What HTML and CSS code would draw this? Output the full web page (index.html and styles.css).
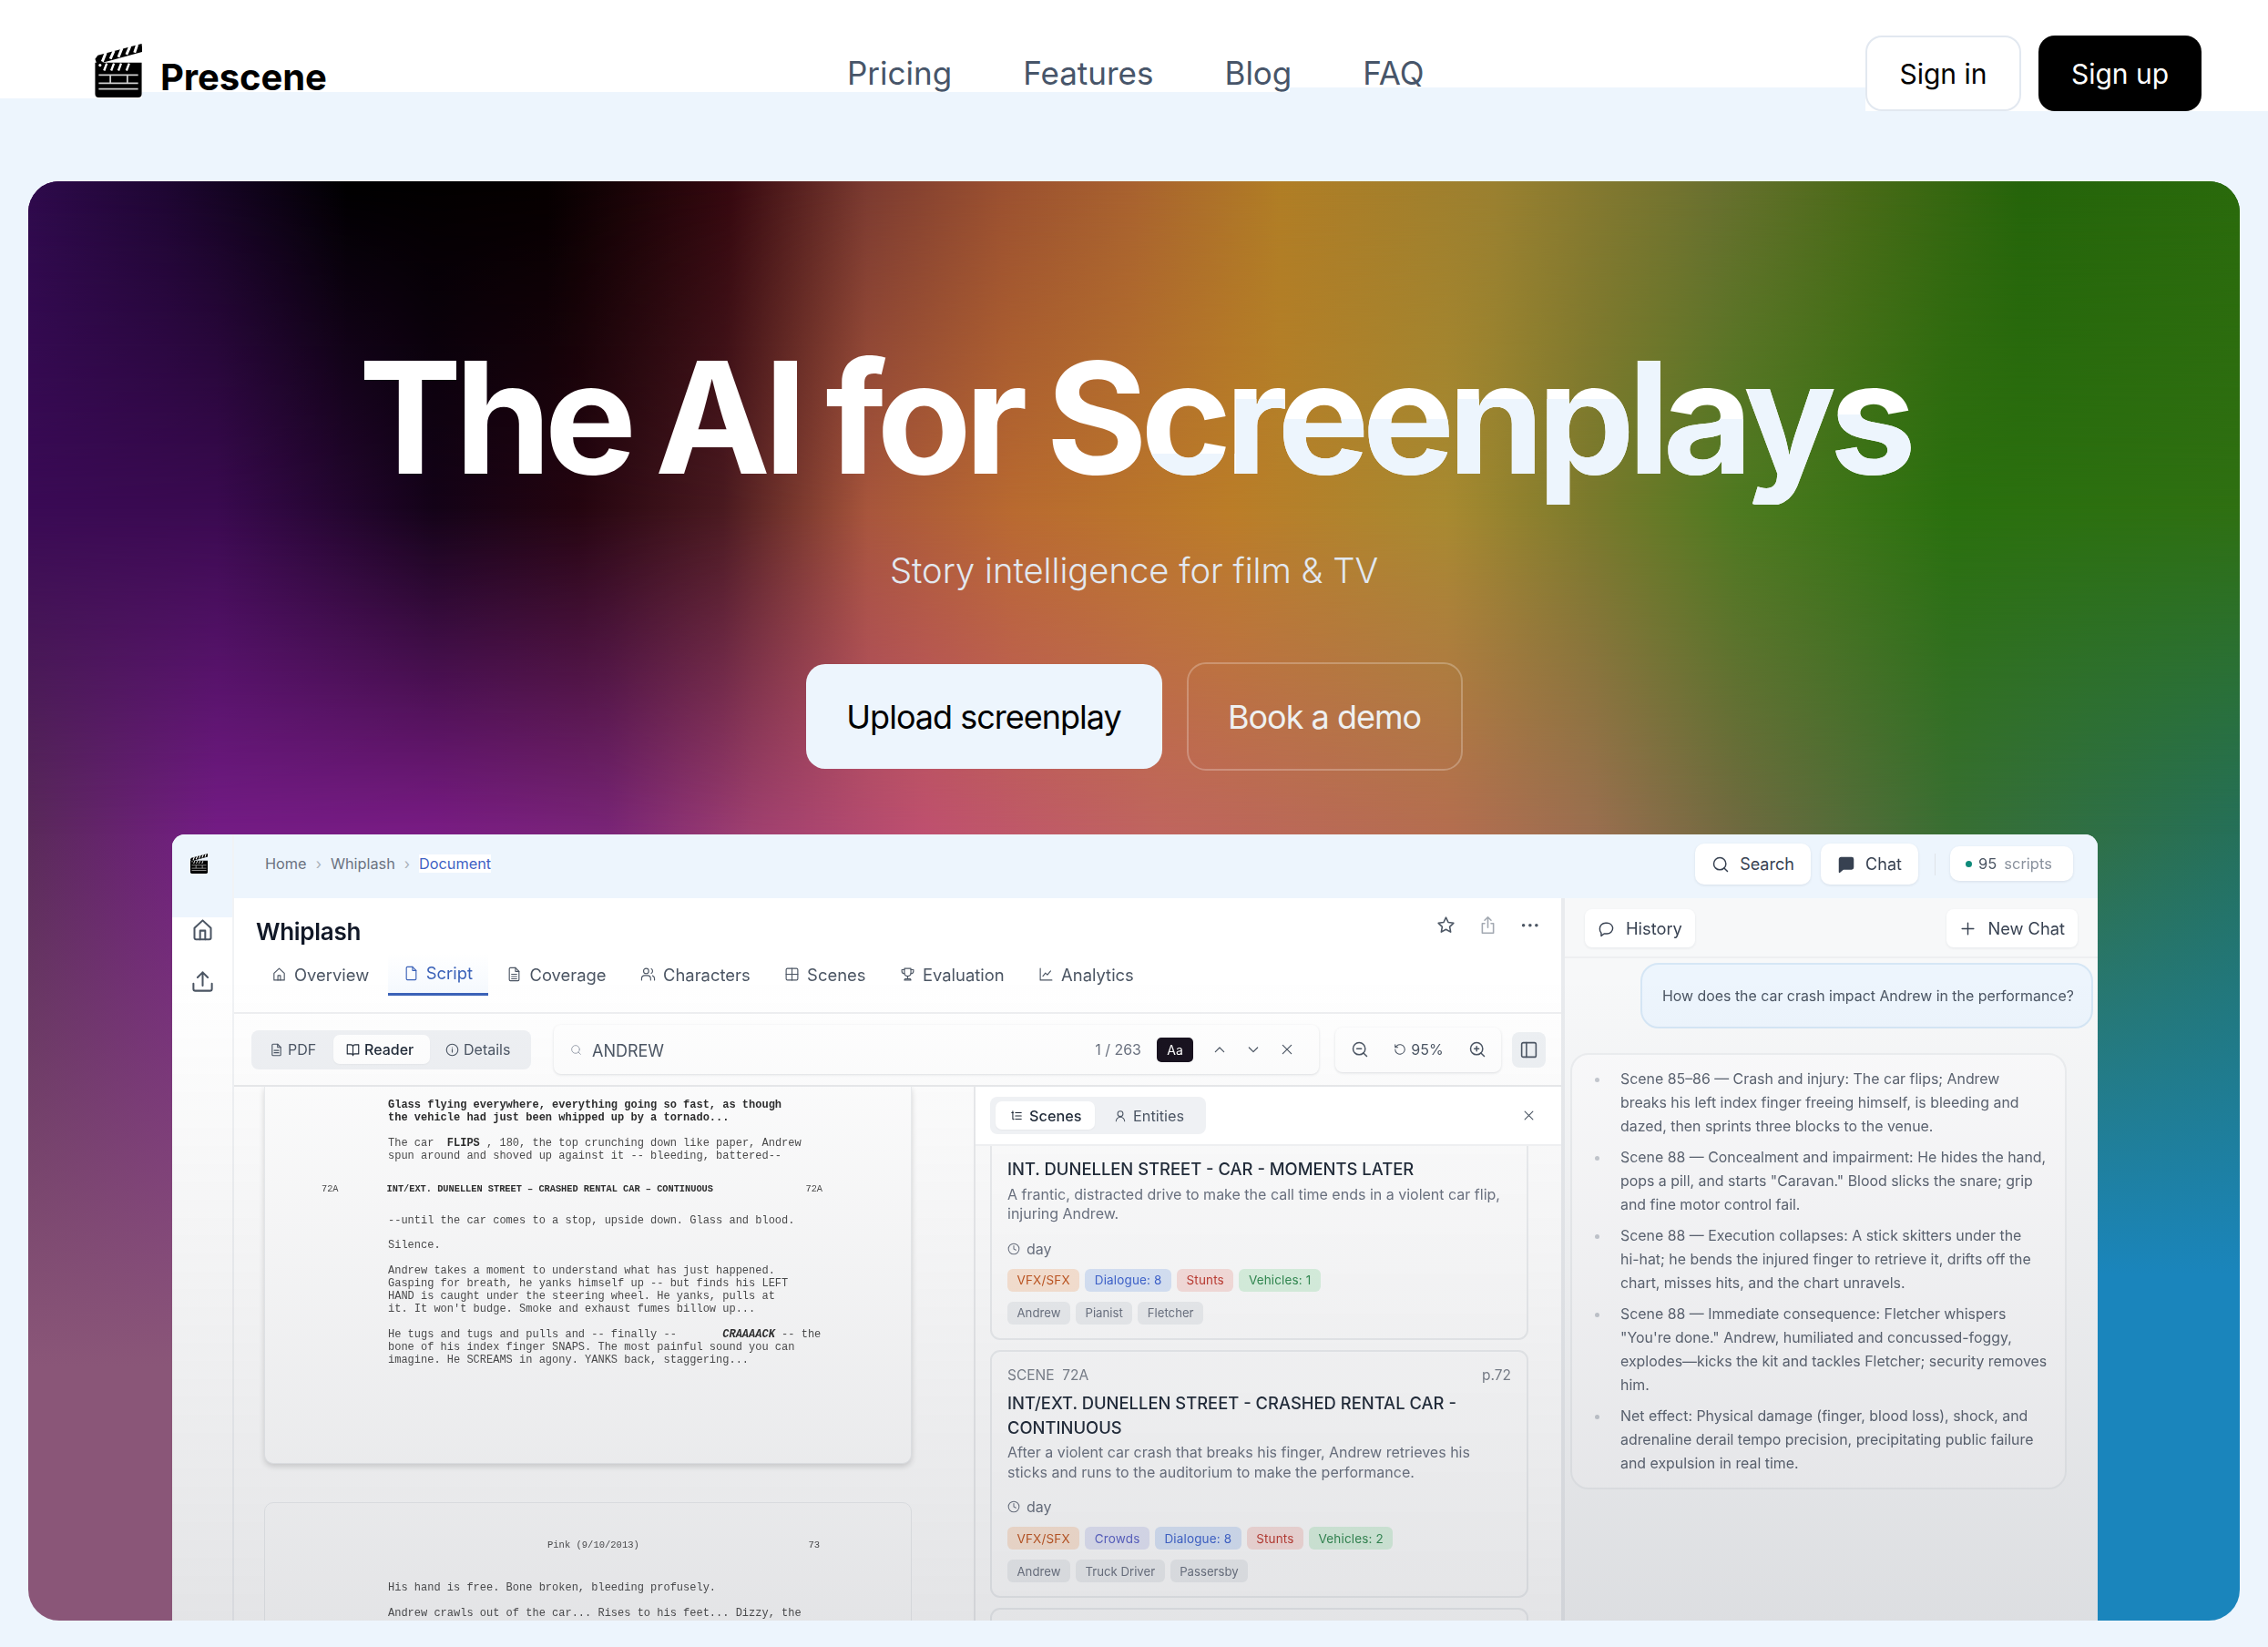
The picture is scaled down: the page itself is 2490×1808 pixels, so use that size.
FILE: index.html
```html
<!DOCTYPE html>
<html lang="en">
<head>
    <meta charset="UTF-8">
    <title>Prescene - The AI for Screenplays</title>
    <link rel="stylesheet" href="styles.css">
</head>
<body>
    <svg class="sprites" width="0" height="0">
        <symbol id="clapper" viewBox="0 0 52 60">
            <path d="M0 17 3 13 52 0 53 9 2 23z" fill="#000"/>
            <path d="M8 20 12 10M17 17 21 8M26 15 30 5M35 12 39 3M44 10 47 1" stroke="#fff" stroke-width="3" fill="none"/>
            <path d="M0 21h52v35a4 4 0 0 1-4 4H4a4 4 0 0 1-4-4z" fill="#000"/>
            <path d="M10 30l3-8M18 30l3-8M26 30l3-8M35 30l3-8" stroke="#fff" stroke-width="2.400" fill="none"/>
            <path d="M4 35h44M4 44h44M4 50.500h44M17 35v9M36 35v9" stroke="#cfcfcf" stroke-width="1.800" fill="none"/>
            <circle cx="5.500" cy="24" r="1.600" fill="#fff"/>
        </symbol>
    </svg>

    <header class="site-header">
        <a class="brand">
            <svg class="brand-logo"><use href="#clapper"/></svg>
            <span>Prescene</span>
        </a>
        <nav class="site-nav">
            <a>Pricing</a>
            <a>Features</a>
            <a>Blog</a>
            <a>FAQ</a>
        </nav>
        <div class="auth">
            <a class="sign-in">Sign in</a>
            <a class="sign-up">Sign up</a>
        </div>
    </header>

    <section class="hero">
        <h1>The AI for Screenplays</h1>
        <p class="tagline">Story intelligence for film &amp; TV</p>
        <div class="cta">
            <a class="cta-main">Upload screenplay</a>
            <a class="cta-alt">Book a demo</a>
        </div>

        <div class="app">
            <aside class="rail">
                <div class="rail-top"><svg class="rail-logo"><use href="#clapper"/></svg></div>
                <svg class="icon rail-icon" viewBox="0 0 24 24"><path d="M4 10.500 12 3l8 7.500V20a1.500 1.500 0 0 1-1.500 1.500h-13A1.500 1.500 0 0 1 4 20z"/><path d="M9.500 21.500V13h5v8.500"/></svg>
                <svg class="icon rail-icon" viewBox="0 0 24 24"><path d="M12 16V3M7 8l5-5 5 5"/><path d="M3 14v5a2 2 0 0 0 2 2h14a2 2 0 0 0 2-2v-5"/></svg>
            </aside>

            <div class="workspace">
                <div class="topbar">
                    <div class="crumbs">
                        <span>Home</span><i>›</i><span>Whiplash</span><i>›</i><span class="crumb-now">Document</span>
                    </div>
                    <div class="top-actions">
                        <a class="top-btn search-btn">
                            <svg class="icon" viewBox="0 0 24 24"><circle cx="11" cy="11" r="8"/><path d="m21 21-4.300-4.300"/></svg>Search
                        </a>
                        <a class="top-btn chat-btn">
                            <svg class="icon" viewBox="0 0 24 24"><path class="solid" d="M3 5a2 2 0 0 1 2-2h14a2 2 0 0 1 2 2v11a2 2 0 0 1-2 2H8l-5 4z"/></svg>Chat
                        </a>
                        <span class="top-sep"></span>
                        <span class="scripts-pill"><b class="dot"></b><em>95</em> scripts</span>
                    </div>
                </div>

                <div class="panes">
                    <main class="doc">
                        <div class="doc-head">
                            <div class="doc-title">
                                <h2>Whiplash</h2>
                                <div class="doc-tools">
                                    <svg class="icon" viewBox="0 0 24 24"><path d="m12 2.500 2.900 6.100 6.600.9-4.800 4.600 1.200 6.600-5.900-3.200-5.900 3.200 1.200-6.600L2.500 9.500l6.600-.9z"/></svg>
                                    <svg class="icon faint" viewBox="0 0 24 24"><path d="M12 15V2M8 6l4-4 4 4"/><path d="M8 10H5v12h14V10h-3"/></svg>
                                    <span class="dots">•••</span>
                                </div>
                            </div>
                            <nav class="tabs">
                                <a><svg class="icon" viewBox="0 0 24 24"><path d="M4 10.500 12 3l8 7.500V21H4z"/><path d="M10 21v-7h4v7"/></svg>Overview</a>
                                <a class="tab-on"><svg class="icon" viewBox="0 0 24 24"><path d="M14 2H6a1.500 1.500 0 0 0-1.500 1.500v17A1.500 1.500 0 0 0 6 22h12a1.500 1.500 0 0 0 1.500-1.500V7.500z"/><path d="M14 2v5.500h5.500"/></svg>Script</a>
                                <a><svg class="icon" viewBox="0 0 24 24"><path d="M14 2H6a1.500 1.500 0 0 0-1.500 1.500v17A1.500 1.500 0 0 0 6 22h12a1.500 1.500 0 0 0 1.500-1.500V7.500z"/><path d="M14 2v5.500h5.500M8 12h8M8 15.500h8M8 19h8"/></svg>Coverage</a>
                                <a><svg class="icon" viewBox="0 0 24 24"><circle cx="9" cy="7" r="4"/><path d="M2 21v-2a5 5 0 0 1 5-5h4a5 5 0 0 1 5 5v2M17 3.500a4 4 0 0 1 0 7M19 14.300a5 5 0 0 1 3 4.700v2"/></svg>Characters</a>
                                <a><svg class="icon" viewBox="0 0 24 24"><rect x="3" y="3" width="18" height="18" rx="2"/><path d="M3 12h18M12 3v18"/></svg>Scenes</a>
                                <a><svg class="icon" viewBox="0 0 24 24"><path d="M7 3h10v7a5 5 0 0 1-10 0z"/><path d="M7 5H3v2a4 4 0 0 0 4 4M17 5h4v2a4 4 0 0 1-4 4M12 15v4M7 21l1-2h8l1 2z"/></svg>Evaluation</a>
                                <a><svg class="icon" viewBox="0 0 24 24"><path d="M3 3v18h18"/><path d="m7 15 4-5 3 3 5-6"/></svg>Analytics</a>
                            </nav>
                        </div>

                        <div class="doc-toolbar">
                            <div class="seg">
                                <a><svg class="icon" viewBox="0 0 24 24"><path d="M14 2H6a1.500 1.500 0 0 0-1.500 1.500v17A1.500 1.500 0 0 0 6 22h12a1.500 1.500 0 0 0 1.500-1.500V7.500z"/><path d="M14 2v5.500h5.500M8 13h8M8 17h8"/></svg>PDF</a>
                                <a class="seg-on"><svg class="icon" viewBox="0 0 24 24"><path d="M12 6a4 4 0 0 0-4-3H2v16h7a3 3 0 0 1 3 3 3 3 0 0 1 3-3h7V3h-6a4 4 0 0 0-4 3zM12 6v16"/></svg>Reader</a>
                                <a><svg class="icon" viewBox="0 0 24 24"><circle cx="12" cy="12" r="10"/><path d="M12 16v-5M12 8h.010"/></svg>Details</a>
                            </div>
                            <div class="find">
                                <svg class="icon find-glass" viewBox="0 0 24 24"><circle cx="11" cy="11" r="8"/><path d="m21 21-4.300-4.300"/></svg>
                                <span class="find-term">ANDREW</span>
                                <span class="find-count">1 / 263</span>
                                <span class="find-case">Aa</span>
                                <svg class="icon find-nav" viewBox="0 0 24 24"><path d="m5 16 7-7 7 7"/></svg>
                                <svg class="icon find-nav" viewBox="0 0 24 24"><path d="m5 9 7 7 7-7"/></svg>
                                <svg class="icon find-nav" viewBox="0 0 24 24"><path d="M5 5l14 14M19 5 5 19"/></svg>
                            </div>
                            <div class="zoom">
                                <svg class="icon" viewBox="0 0 24 24"><circle cx="11" cy="11" r="8"/><path d="m21 21-4.300-4.300M8 11h6"/></svg>
                                <span class="zoom-val"><svg class="icon" viewBox="0 0 24 24"><path d="M3 12a9 9 0 1 0 3-6.700L3 8M3 3v5h5"/></svg>95%</span>
                                <svg class="icon" viewBox="0 0 24 24"><circle cx="11" cy="11" r="8"/><path d="m21 21-4.300-4.300M11 8v6M8 11h6"/></svg>
                            </div>
                            <span class="panel-toggle"><svg class="icon" viewBox="0 0 24 24"><rect x="3" y="3" width="18" height="18" rx="2"/><path d="M9 3v18"/></svg></span>
                        </div>

                        <div class="doc-body">
                            <div class="reader">
                                <div class="page page-one">
                                    <p class="strong">Glass flying everywhere, everything going so fast, as though
the vehicle had just been whipped up by a tornado...</p>
                                    <p>The car  <b>FLIPS</b> , 180, the top crunching down like paper, Andrew
spun around and shoved up against it -- bleeding, battered--</p>
                                    <div class="slug"><span>72A</span><b>INT/EXT. DUNELLEN STREET – CRASHED RENTAL CAR – CONTINUOUS</b><span>72A</span></div>
                                    <p>--until the car comes to a stop, upside down. Glass and blood.</p>
                                    <p>Silence.</p>
                                    <p>Andrew takes a moment to understand what has just happened.
Gasping for breath, he yanks himself up -- but finds his LEFT
HAND is caught under the steering wheel. He yanks, pulls at
it. It won't budge. Smoke and exhaust fumes billow up...</p>
                                    <p>He tugs and tugs and pulls and -- finally --       <b><i>CRAAAACK</i></b> -- the
bone of his index finger SNAPS. The most painful sound you can
imagine. He SCREAMS in agony. YANKS back, staggering...</p>
                                </div>
                                <div class="page page-two">
                                    <div class="page-mark"><span>Pink (9/10/2013)</span><span>73</span></div>
                                    <p>His hand is free. Bone broken, bleeding profusely.</p>
                                    <p>Andrew crawls out of the car... Rises to his feet... Dizzy, the</p>
                                </div>
                            </div>

                            <div class="scenes">
                                <div class="scenes-head">
                                    <div class="scenes-seg">
                                        <a class="seg-on"><svg class="icon" viewBox="0 0 24 24"><path d="M3 6h3M10 6h11M10 12h11M10 18h11M5 3v15a2 2 0 0 0 2 0"/></svg>Scenes</a>
                                        <a><svg class="icon" viewBox="0 0 24 24"><circle cx="12" cy="8" r="5"/><path d="M4 22a8 8 0 0 1 16 0"/></svg>Entities</a>
                                    </div>
                                    <svg class="icon scenes-close" viewBox="0 0 24 24"><path d="M5 5l14 14M19 5 5 19"/></svg>
                                </div>
                                <div class="scene-list">
                                    <article class="scene-card card-cut">
                                        <h3>INT. DUNELLEN STREET - CAR - MOMENTS LATER</h3>
                                        <p class="scene-desc">A frantic, distracted drive to make the call time ends in a violent car flip, injuring Andrew.</p>
                                        <div class="scene-time"><svg class="icon" viewBox="0 0 24 24"><circle cx="12" cy="12" r="10"/><path d="M12 6v6l4 2"/></svg>day</div>
                                        <div class="chips">
                                            <span class="chip vfx">VFX/SFX</span><span class="chip dialog">Dialogue: 8</span><span class="chip stunt">Stunts</span><span class="chip vehicle">Vehicles: 1</span>
                                        </div>
                                        <div class="chips people">
                                            <span class="chip">Andrew</span><span class="chip">Pianist</span><span class="chip">Fletcher</span>
                                        </div>
                                    </article>
                                    <article class="scene-card">
                                        <div class="scene-no"><span>SCENE&nbsp; 72A</span><span>p.72</span></div>
                                        <h3>INT/EXT. DUNELLEN STREET - CRASHED RENTAL CAR - CONTINUOUS</h3>
                                        <p class="scene-desc">After a violent car crash that breaks his finger, Andrew retrieves his sticks and runs to the auditorium to make the performance.</p>
                                        <div class="scene-time"><svg class="icon" viewBox="0 0 24 24"><circle cx="12" cy="12" r="10"/><path d="M12 6v6l4 2"/></svg>day</div>
                                        <div class="chips">
                                            <span class="chip vfx">VFX/SFX</span><span class="chip crowd">Crowds</span><span class="chip dialog">Dialogue: 8</span><span class="chip stunt">Stunts</span><span class="chip vehicle">Vehicles: 2</span>
                                        </div>
                                        <div class="chips people">
                                            <span class="chip">Andrew</span><span class="chip">Truck Driver</span><span class="chip">Passersby</span>
                                        </div>
                                    </article>
                                    <article class="scene-card"></article>
                                </div>
                            </div>
                        </div>
                    </main>

                    <aside class="chat">
                        <div class="chat-head">
                            <a class="chat-btn-sm"><svg class="icon" viewBox="0 0 24 24"><path d="M21 11a8 8 0 0 1-8 8H9l-4 3v-4a8 8 0 0 1-2-6 8 8 0 0 1 8-8h2a8 8 0 0 1 8 7z"/></svg>History</a>
                            <a class="chat-btn-sm"><svg class="icon" viewBox="0 0 24 24"><path d="M12 4v16M4 12h16"/></svg>New Chat</a>
                        </div>
                        <div class="bubble">How does the car crash impact Andrew in the performance?</div>
                        <ul class="answer">
                            <li>Scene 85–86 — Crash and injury: The car flips; Andrew <span class="nowrap">breaks his</span> left index finger freeing himself, is bleeding and dazed, then sprints three blocks to the venue.</li>
                            <li>Scene 88 — Concealment and impairment: He hides the hand, pops a pill, and starts "Caravan." Blood slicks the snare; grip and fine motor control fail.</li>
                            <li>Scene 88 — Execution collapses: A stick skitters under the <span class="nowrap">hi-hat;</span> he bends the injured finger to retrieve it, drifts off the chart, misses hits, and the chart unravels.</li>
                            <li>Scene 88 — Immediate consequence: Fletcher whispers "You're done." Andrew, humiliated and concussed-foggy, explodes—kicks the kit and tackles Fletcher; security removes him.</li>
                            <li>Net effect: Physical damage (finger, blood loss), shock, and adrenaline derail tempo precision, precipitating public failure and expulsion in real time.</li>
                        </ul>
                    </aside>
                </div>
            </div>
        </div>
    </section>
</body>
</html>
```

FILE: styles.css
```css
* {
    box-sizing: border-box;
}
html, body {
    margin: 0;
    height: 1808px;
    overflow: hidden;
}
body {
    font-family: Inter, "Liberation Sans", sans-serif;
    background-color: #edf5fd;
    color: #000;
    /* the white bar has an uneven lower edge in the capture */
    background-image:
        linear-gradient(#fff, #fff),
        linear-gradient(#fff, #fff),
        linear-gradient(#fff, #fff),
        linear-gradient(#fff, #fff);
    background-repeat: no-repeat;
    background-size: 156px 108px, 1260px 101px, 632px 96px, 442px 122px;
    background-position: 0 0, 156px 0, 1416px 0, 2048px 0;
}
a {
    color: inherit;
    text-decoration: none;
}
.sprites {
    position: absolute;
}
.nowrap {
    white-space: nowrap;
}
.icon {
    width: 16px;
    height: 16px;
    fill: none;
    stroke: currentColor;
    stroke-width: 1.800;
    stroke-linecap: round;
    stroke-linejoin: round;
    flex: none;
}
.icon .solid {
    fill: currentColor;
}

/* header */
.site-header {
    height: 199px;
    padding: 39px 0 0 104px;
    display: flex;
    align-items: flex-start;
}
.brand {
    display: flex;
    align-items: flex-end;
    gap: 20px;
    width: 826px;
    margin-top: 9px;
    font-size: 40px;
    font-weight: 700;
    letter-spacing: -0.1px;
    line-height: 59px;
}
.brand span {
    position: relative;
    top: 7px;
}
.brand-logo {
    width: 52px;
    height: 59px;
}
.site-nav {
    display: flex;
    gap: 78px;
    font-size: 35px;
    color: #475569;
    line-height: 44px;
    margin-top: 19px;
    width: 1118px;
}
.auth {
    display: flex;
    gap: 19px;
    font-size: 30px;
}
.auth a {
    height: 83px;
    border-radius: 18px;
    display: flex;
    align-items: center;
    justify-content: center;
}
.sign-in {
    width: 171px;
    background: #fff;
    border: 2px solid #e2e8f0;
}
.sign-up {
    width: 179px;
    background: #000;
    color: #fff;
}

/* hero: three colour rows blended down the card, strips below the last row */
.hero {
    margin: 0 31px;
    height: 1580px;
    width: 2428px;
    border-radius: 34px;
    overflow: hidden;
    position: relative;
    isolation: isolate;
    text-align: center;
    color: #fff;
    background-image:
        linear-gradient(180deg, rgba(138, 86, 120, 0) 717px, #8a5678 1300px),
        linear-gradient(180deg, rgba(26, 133, 188, 0) 717px, #1a85bc 1200px),
        linear-gradient(90deg, #5a2a5a 0, #741c85 207px, #7a1c85 445px, #7a2578 636px, #a04070 795px, #bf5070 985px, #c0655f 1240px, #b56e50 1557px, #9b6f50 1716px, #706a40 1875px, #386f33 2113px, #25705a 2428px);
    background-repeat: no-repeat;
    background-size: 158px 100%, 156px 100%, 100% 100%;
    background-position: 0 0, 100% 0, 0 0;
}
.hero::before,
.hero::after {
    content: "";
    position: absolute;
    inset: 0;
    z-index: 0;
}
.hero::before {
    background: linear-gradient(90deg, #3a0a55 0, #3a0a50 207px, #140318 445px, #250510 604px, #4a1a20 763px, #a8563c 922px, #b96a30 1081px, #bb7d28 1319px, #a88a30 1557px, #7a7a2c 1716px, #4e7a20 1875px, #2a700e 2113px, #2f7012 2428px);
    -webkit-mask-image: linear-gradient(180deg, #000 361px, transparent 717px);
    mask-image: linear-gradient(180deg, #000 361px, transparent 717px);
}
.hero::after {
    background: linear-gradient(90deg, #2e0a4c 0, #1e0632 150px, #000 350px, #050000 570px, #35080f 770px, #7a3a30 920px, #9a5030 1070px, #a8622f 1214px, #b07d25 1373px, #9a8030 1610px, #6a7030 1850px, #4a6a18 2010px, #25640a 2190px, #2a6a0c 2428px);
    -webkit-mask-image: linear-gradient(180deg, #000 0, transparent 361px);
    mask-image: linear-gradient(180deg, #000 0, transparent 361px);
}
.hero h1,
.tagline,
.cta,
.app {
    position: relative;
    z-index: 1;
}
.hero h1 {
    margin: 0;
    padding-top: 163px;
    font-size: 170px;
    line-height: 192px;
    font-weight: 700;
    letter-spacing: -7.600px;
    word-spacing: -5px;
    color: transparent;
    /* the capture shows the page's pale blue through the lower part of some letters */
    background-image:
        linear-gradient(#edf5fd, #edf5fd),
        linear-gradient(#edf5fd, #edf5fd),
        linear-gradient(#edf5fd, #edf5fd),
        linear-gradient(#edf5fd, #edf5fd),
        linear-gradient(#edf5fd, #edf5fd),
        linear-gradient(#edf5fd, #edf5fd),
        linear-gradient(#edf5fd, #edf5fd),
        linear-gradient(#edf5fd, #edf5fd),
        linear-gradient(#fff, #fff);
    background-repeat: no-repeat;
    background-size: 93px 100%, 53px 100%, 188px 100%, 197px 100%, 35px 100%, 90px 100%, 92px 100%, 100px 100%, 100% 100%;
    background-position: 1232px 299px, 1326px 239px, 1379px 261px, 1567px 239px, 1764px 0, 1799px 261px, 1889px 0, 1981px 256px, 0 0;
    -webkit-background-clip: text;
    background-clip: text;
}
.tagline {
    margin: 50px 0 0;
    font-size: 38.200px;
    line-height: 45px;
    font-weight: 300;
    color: #e2e8f0;
}
.cta {
    display: flex;
    justify-content: center;
    gap: 27px;
    margin-top: 78px;
    font-size: 36px;
    letter-spacing: -1px;
}
.cta a {
    display: flex;
    align-items: center;
    justify-content: center;
    border-radius: 21px;
}
.cta-main {
    width: 391px;
    height: 115px;
    background: #edf5fd;
    color: #000;
    margin-top: 2px;
}
.cta-alt {
    width: 303px;
    height: 119px;
    color: #eef0f0;
    border: 2px solid rgba(255, 255, 255, .25);
}

/* the app picture */
.app {
    margin: 70px 0 0 158px;
    width: 2114px;
    height: 863px;
    background: #fff;
    border-radius: 14px 14px 0 0;
    overflow: hidden;
    display: flex;
    text-align: left;
    color: #4b5563;
    font-size: 16px;
    filter: blur(.45px);
}
.app::after {
    content: "";
    position: absolute;
    inset: 0;
    pointer-events: none;
    background: linear-gradient(180deg, rgba(60, 65, 80, 0) 18%, rgba(60, 65, 80, .14) 100%);
}
.rail {
    width: 68px;
    flex: none;
    border-right: 2px solid #f1f3f5;
    display: flex;
    flex-direction: column;
    align-items: center;
}
.rail-top {
    align-self: stretch;
    height: 91px;
    background: #edf5fd;
    padding: 21px 0 0 20px;
}
.rail-logo {
    width: 19px;
    height: 22px;
    display: block;
}
.rail-icon {
    width: 27px;
    height: 27px;
    color: #4b5563;
    margin: 0 0 30px;
}
.workspace {
    flex: 1;
    min-width: 0;
    display: flex;
    flex-direction: column;
}
.topbar {
    height: 70px;
    background: #edf5fd;
    display: flex;
    justify-content: space-between;
    align-items: flex-start;
    padding: 10px 27px 0 34px;
}
.crumbs {
    display: flex;
    align-items: center;
    gap: 10px;
    font-size: 16.300px;
    color: #6b7280;
    height: 44px;
}
.crumbs i {
    font-style: normal;
    color: #aab0b8;
}
.crumb-now {
    color: #3f62c4;
    background: #fff;
}
.top-actions {
    display: flex;
    align-items: flex-start;
    gap: 11px;
    color: #374151;
}
.top-btn {
    display: flex;
    align-items: center;
    justify-content: center;
    gap: 11px;
    height: 45px;
    background: #fff;
    border-radius: 10px;
    box-shadow: 0 1px 3px rgba(30, 40, 60, .1);
    font-size: 18px;
}
.top-btn .icon {
    width: 20px;
    height: 20px;
}
.search-btn {
    width: 127px;
}
.chat-btn {
    width: 107px;
}
.top-sep {
    width: 1px;
    height: 24px;
    margin: 11px 5px 0 7px;
    background: #dfe3e8;
}
.scripts-pill {
    width: 135px;
    height: 38px;
    margin-top: 3px;
    display: flex;
    align-items: center;
    gap: 7px;
    padding-left: 17px;
    background: #fff;
    border-radius: 10px;
    box-shadow: 0 1px 3px rgba(30, 40, 60, .1);
    font-size: 16.500px;
    color: #8a929e;
}
.scripts-pill em {
    font-style: normal;
    color: #4b5563;
    margin-right: 1px;
}
.dot {
    width: 7px;
    height: 7px;
    border-radius: 50%;
    background: #0f8a7a;
}
.panes {
    flex: 1;
    display: flex;
    min-height: 0;
}
.doc {
    width: 1457px;
    display: flex;
    flex-direction: column;
}
.doc-head {
    height: 127px;
    border-bottom: 2px solid #eeeff1;
    padding: 20px 23px 0 24px;
}
.doc-title {
    display: flex;
    justify-content: space-between;
    height: 34px;
    align-items: center;
}
.doc-title h2 {
    margin: 0;
    font-size: 26px;
    line-height: 34px;
    font-weight: 600;
    letter-spacing: -0.300px;
    color: #111827;
}
.doc-tools {
    display: flex;
    align-items: center;
    gap: 25px;
    margin-top: -16px;
    color: #4b5563;
}
.doc-tools .icon {
    width: 21px;
    height: 21px;
}
.doc-tools .faint {
    color: #a3a9b2;
}
.dots {
    font-size: 11px;
    letter-spacing: 1px;
}
.tabs {
    display: flex;
    gap: 3.500px;
    margin-top: 6px;
    height: 47px;
    font-size: 18.400px;
}
.tabs a {
    display: flex;
    align-items: center;
    gap: 8px;
    padding: 0 17px;
    height: 47px;
}
.tab-on {
    color: #3b62b8;
    border-bottom: 3px solid #3b62b8;
    background: linear-gradient(180deg, #fff 0, #f5f9fe 100%);
}
.tabs .icon {
    width: 17px;
    height: 17px;
    stroke-width: 1.600;
}
.doc-toolbar {
    height: 80px;
    border-bottom: 2px solid #e9eaec;
    display: flex;
    align-items: center;
    padding: 0 16px 0 19px;
    position: relative;
}
.seg {
    display: flex;
    align-items: center;
    width: 307px;
    height: 43px;
    padding: 0 4px 0 20px;
    gap: 0;
    background: #eff1f4;
    border-radius: 8px;
    font-size: 16px;
}
.seg a {
    display: flex;
    align-items: center;
    gap: 5px;
    height: 32px;
}
.seg a:first-child {
    width: 70px;
}
.seg-on {
    background: #fff;
    border-radius: 7px;
    color: #1f2937;
    font-weight: 500;
    box-shadow: 0 1px 2px rgba(0, 0, 0, .04);
}
.seg .seg-on {
    width: 106px;
    padding-left: 14px;
    margin-right: 17px;
}
.seg .icon {
    width: 15px;
    height: 15px;
}
.find {
    width: 840px;
    height: 54px;
    margin-left: 25px;
    padding: 0 27px 0 18px;
    display: flex;
    align-items: center;
    border-radius: 8px;
    background: #fff;
    box-shadow: 0 1px 3px rgba(30, 40, 60, .14);
    font-size: 18px;
}
.find-glass {
    width: 13px;
    height: 13px;
    color: #9ca3af;
}
.find-term {
    margin-left: 11px;
    flex: 1;
    padding-top: 3px;
}
.find-count {
    color: #6b7280;
    font-size: 16px;
    margin-right: 17px;
}
.find-case {
    width: 40px;
    height: 27px;
    background: #18121f;
    color: #fff;
    border-radius: 5px;
    display: flex;
    align-items: center;
    justify-content: center;
    font-size: 14px;
    margin-right: 21px;
}
.find-nav {
    margin-left: 21px;
    color: #4b5563;
}
.find-case + .find-nav {
    margin-left: 0;
}
.zoom {
    width: 182px;
    height: 49px;
    margin-left: 18px;
    padding: 0 16px 0 17px;
    display: flex;
    align-items: center;
    justify-content: space-between;
    border-radius: 8px;
    background: #fff;
    box-shadow: 0 1px 3px rgba(30, 40, 60, .14);
    font-size: 16px;
}
.zoom > .icon {
    width: 20px;
    height: 20px;
}
.zoom-val {
    display: flex;
    align-items: center;
    gap: 5px;
}
.zoom-val .icon {
    width: 14px;
    height: 14px;
}
.panel-toggle {
    width: 37px;
    height: 39px;
    margin-left: 12px;
    border-radius: 8px;
    background: #eef1f4;
    display: flex;
    align-items: center;
    justify-content: center;
}
.panel-toggle .icon {
    width: 21px;
    height: 21px;
}
.doc-body {
    flex: 1;
    display: flex;
    min-height: 0;
}
.reader {
    width: 814px;
    flex: none;
    border-right: 2px solid #eaebed;
    padding: 0 69px 0 33px;
    overflow: hidden;
}
.page {
    font-family: "Liberation Mono", monospace;
    font-size: 12px;
    line-height: 13.900px;
    color: #4a4a4a;
    padding-left: 135px;
    width: 711px;
    background: #fff;
    border: 1px solid #eceef0;
    border-radius: 10px;
}
.page p {
    margin: 0 0 14px;
    white-space: pre;
}
.page b {
    color: #2c2c2c;
}
.page .strong {
    font-weight: 700;
    color: #2c2c2c;
}
.page-one {
    height: 414px;
    border-top: 0;
    border-radius: 0 0 10px 10px;
    padding-top: 14px;
    box-shadow: 0 3px 6px rgba(0, 0, 0, .16);
}
.slug {
    display: flex;
    align-items: center;
    margin: 22px 0 21px -73px;
    font-size: 10.300px;
    width: 550px;
    justify-content: space-between;
    white-space: pre;
}
.slug b {
    flex: 1;
    margin-left: 53px;
}
.page-two {
    margin-top: 42px;
    height: 300px;
    padding-top: 40px;
}
.page-mark {
    display: flex;
    font-size: 10.500px;
    margin-bottom: 33px;
    width: 474px;
    justify-content: space-between;
    padding-left: 175px;
}
.scenes {
    flex: 1;
    min-width: 0;
    display: flex;
    flex-direction: column;
}
.scenes-head {
    height: 65px;
    flex: none;
    border-bottom: 2px solid #eeeff1;
    display: flex;
    justify-content: space-between;
    align-items: center;
    padding: 0 28px 0 16px;
    background: #fff;
    position: relative;
    z-index: 1;
}
.scenes-seg {
    width: 237px;
    height: 41px;
    border-radius: 8px;
    background: #eff1f4;
    display: flex;
    align-items: center;
    padding: 0 6px;
    font-size: 16.300px;
}
.scenes-seg a {
    display: flex;
    align-items: center;
    gap: 7px;
    height: 31px;
}
.scenes-seg .seg-on {
    width: 109px;
    padding-left: 16px;
    margin-right: 21px;
}
.scenes-seg .icon {
    width: 14px;
    height: 14px;
}
.scenes-close {
    width: 15px;
    height: 15px;
}
.scene-list {
    padding: 0 36px 0 16px;
}
.scene-card {
    border: 2px solid #eceef0;
    border-radius: 11px;
    padding: 14px 17px 0;
    height: 272px;
    margin-bottom: 11px;
    background: rgba(255, 255, 255, .55);
}
.card-cut {
    height: 215px;
    margin-top: -2px;
    border-top: 0;
    border-radius: 0 0 11px 11px;
    padding-top: 14px;
}
.scene-no {
    display: flex;
    justify-content: space-between;
    color: #7b818b;
    font-size: 15.500px;
    line-height: 24px;
}
.scene-card h3 {
    margin: 5px 0 4px;
    font-size: 18.400px;
    line-height: 26.500px;
    font-weight: 500;
    color: #1f2937;
}
.card-cut h3 {
    margin-top: 0;
}
.scene-desc {
    margin: 0;
    font-size: 16px;
    line-height: 21.500px;
    color: #6b7280;
}
.scene-time {
    display: flex;
    align-items: center;
    gap: 7px;
    margin-top: 15px;
    height: 24px;
    font-size: 16px;
    color: #6b7280;
}
.scene-time .icon {
    width: 14px;
    height: 14px;
}
.chips {
    display: flex;
    gap: 6px;
    margin-top: 10px;
}
.chip {
    height: 25px;
    padding: 0 10.500px;
    display: flex;
    align-items: center;
    border-radius: 6px;
    background: #eef0f2;
    font-size: 13.500px;
    letter-spacing: .15px;
    color: #6b7280;
}
.people {
    margin-top: 11px;
}
.people .chip {
    font-size: 13.200px;
    letter-spacing: 0;
}
.vfx {
    background: #fde6d5;
    color: #c2541d;
}
.dialog {
    background: #dbe7fa;
    color: #3d63d0;
}
.stunt {
    background: #fbe1de;
    color: #c0392f;
}
.vehicle {
    background: #dcf5e2;
    color: #2f8a4f;
}
.crowd {
    background: #e5e7f8;
    color: #5a62c8;
}
.chat {
    flex: 1;
    min-width: 0;
    border-left: 4px solid #e9ebee;
    background: #f7f8f9;
    position: relative;
}
.chat-head {
    height: 66px;
    border-bottom: 2px solid #eeeff1;
    display: flex;
    justify-content: space-between;
    padding: 12px 22px 0 22px;
}
.chat-btn-sm {
    display: flex;
    align-items: center;
    gap: 12px;
    height: 42px;
    padding: 0 14px;
    background: #fff;
    border-radius: 8px;
    box-shadow: 0 1px 3px rgba(30, 40, 60, .08);
    font-size: 18.300px;
    color: #374151;
}
.chat-btn-sm .icon {
    width: 19px;
    height: 19px;
}
.bubble {
    margin: 5px 5px 0 83px;
    height: 72px;
    padding: 0 20px 0 22px;
    display: flex;
    align-items: center;
    white-space: nowrap;
    border-radius: 20px;
    border: 2px solid #d5e6f5;
    background: #edf5fd;
    font-size: 15.900px;
    color: #4b5563;
}
.answer {
    list-style: none;
    margin: 27px 0 0 6px;
    width: 545px;
    padding: 14px 15px 13px 53px;
    border: 2px solid #eceef0;
    border-radius: 20px;
    background: rgba(255, 255, 255, .45);
    font-size: 15.900px;
    line-height: 26px;
    color: #5b6370;
}
.answer li {
    position: relative;
    margin-bottom: 8px;
}
.answer li:last-child {
    margin-bottom: 0;
}
.answer li::before {
    content: "";
    position: absolute;
    left: -28px;
    top: 11px;
    width: 5px;
    height: 5px;
    border-radius: 50%;
    background: #c5c9cf;
}
```
